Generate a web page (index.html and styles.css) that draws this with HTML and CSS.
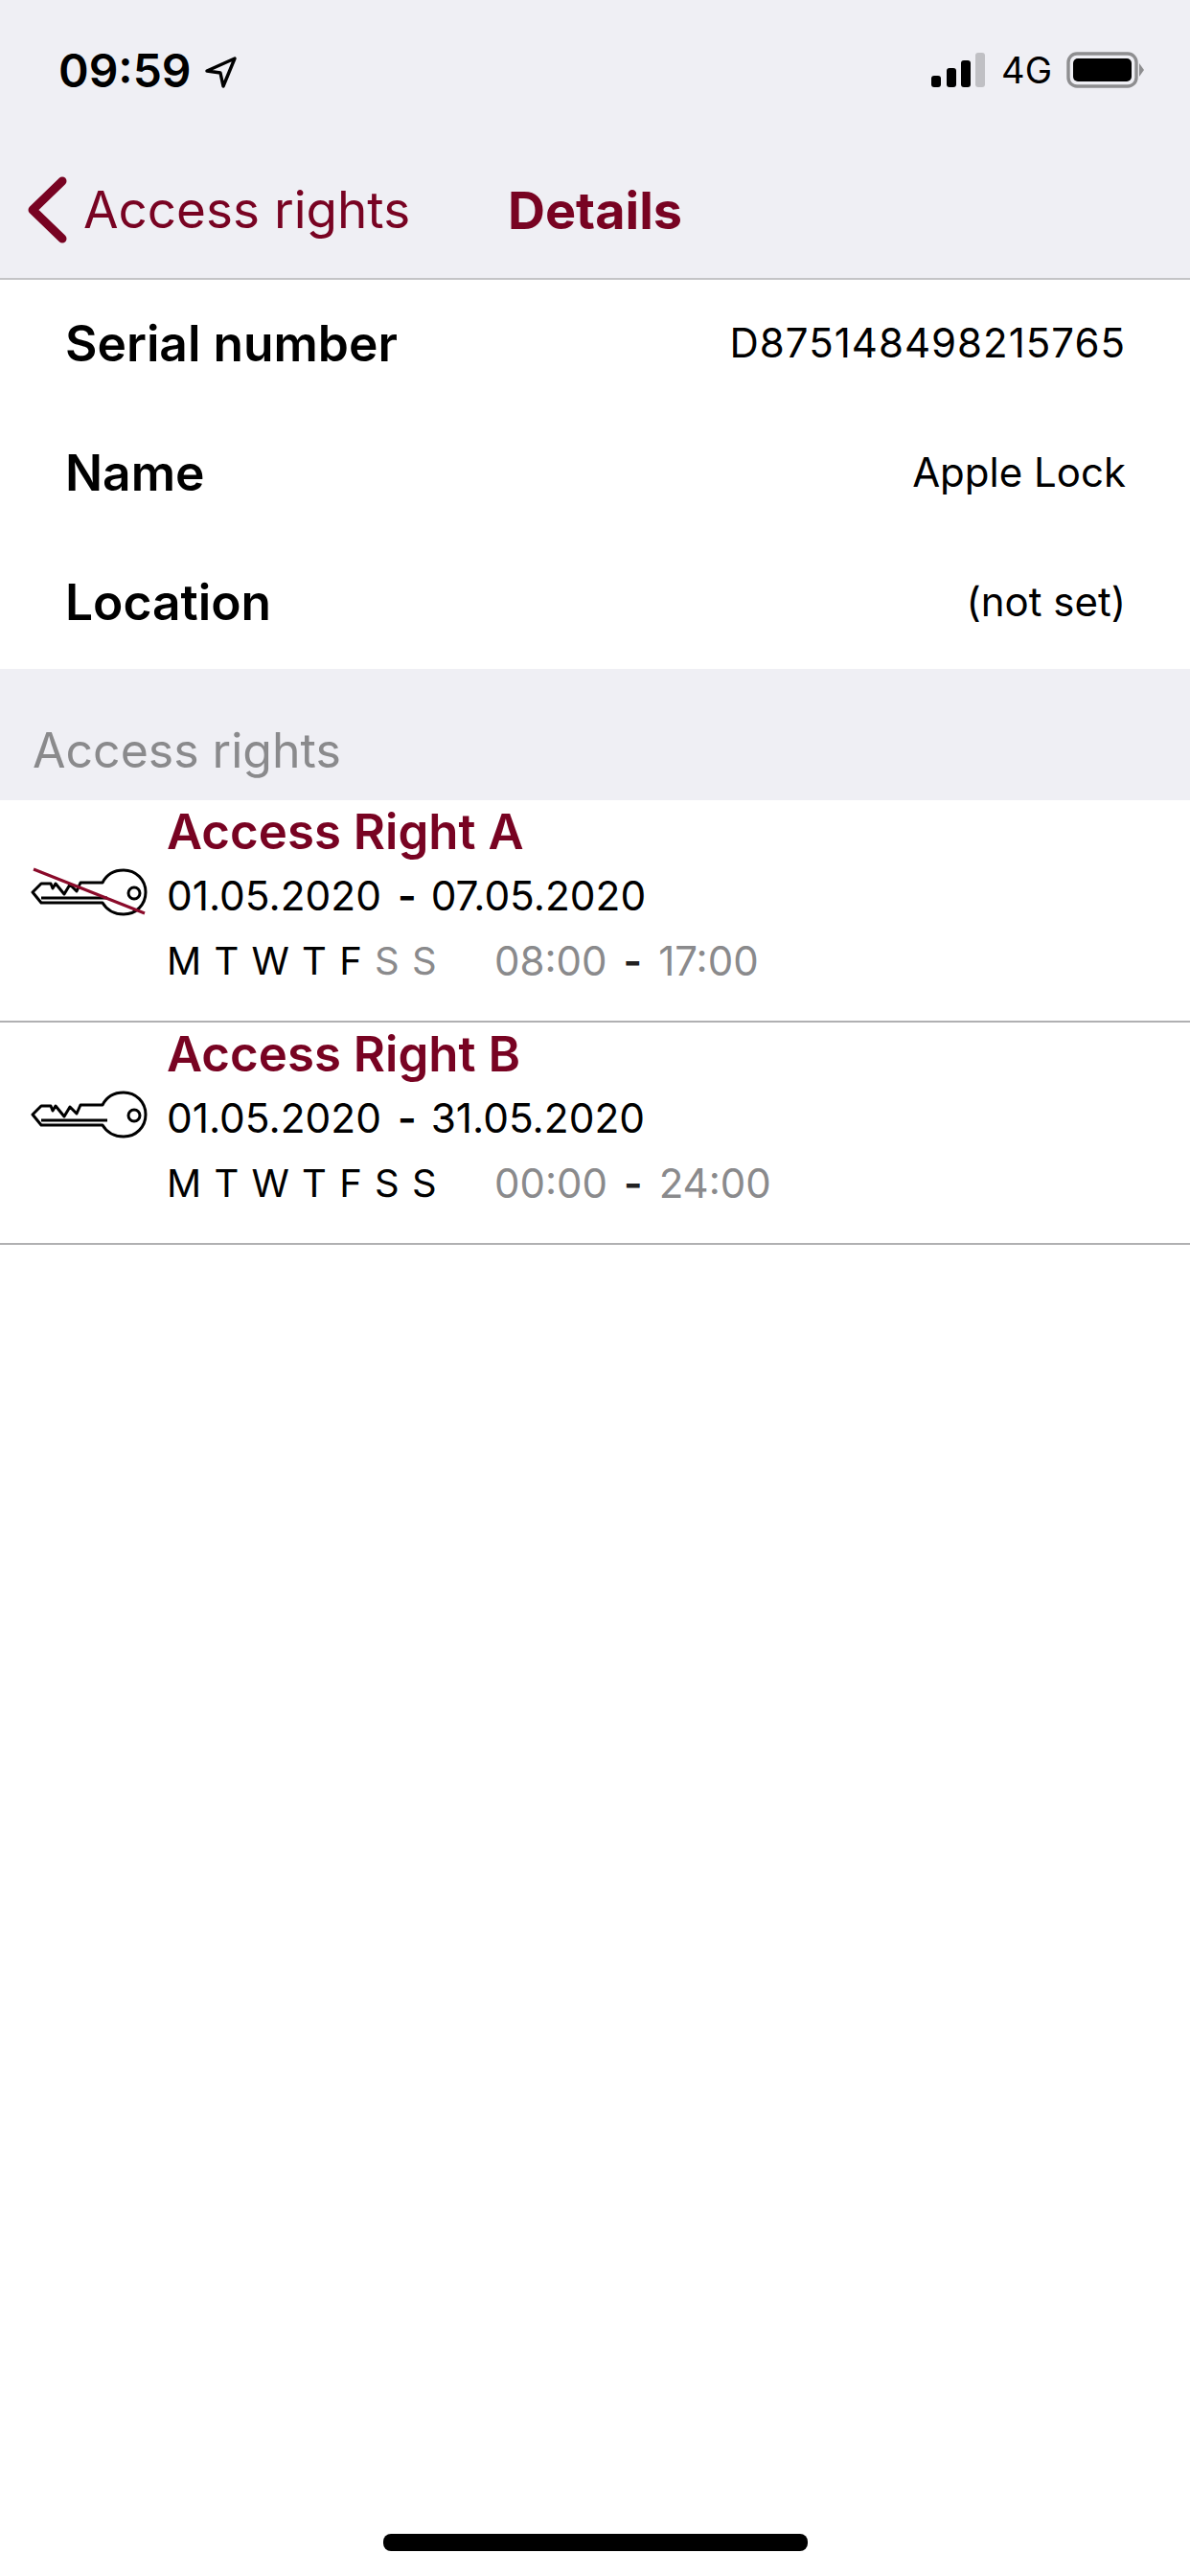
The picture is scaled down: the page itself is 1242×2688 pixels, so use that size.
FILE: index.html
```html
<!DOCTYPE html>
<html lang="en">
<head>
<meta charset="utf-8">
<title>Details</title>
<link rel="stylesheet" href="styles.css">
</head>
<body>
<div class="screen">
  <header class="top">
    <div class="status">
      <div class="status-left">
        <span class="time">09:59</span>
        <svg class="loc" viewBox="0 0 34 34"><path d="M2 15 31 2 19 31 16 17Z" fill="none" stroke="#000" stroke-width="3.4" stroke-linejoin="round"/></svg>
      </div>
      <div class="status-right">
        <div class="signal"><i class="b1"></i><i class="b2"></i><i class="b3"></i><i class="b4"></i></div>
        <span class="net">4G</span>
        <svg class="batt" viewBox="0 0 82 38"><rect x="2" y="2" width="71" height="34" rx="9" fill="none" stroke="#8e8e90" stroke-width="3.4"/><rect x="7" y="7" width="61" height="24" rx="5" fill="#000"/><path d="M76 12 81 19 76 26Z" fill="#8e8e90"/></svg>
      </div>
    </div>
    <nav class="nav">
      <div class="back">
        <svg class="chev" viewBox="0 0 44 72"><path d="M37 6 6 36 37 66" fill="none" stroke="#780322" stroke-width="9" stroke-linecap="round" stroke-linejoin="round"/></svg>
        <span class="back-text">Access rights</span>
      </div>
      <div class="title">Details</div>
      <div class="nav-end"></div>
    </nav>
  </header>

  <section class="props">
    <div class="prop"><span class="prop-k">Serial number</span><span class="prop-v prop-serial">D875148498215765</span></div>
    <div class="prop"><span class="prop-k">Name</span><span class="prop-v">Apple Lock</span></div>
    <div class="prop"><span class="prop-k">Location</span><span class="prop-v">(not set)</span></div>
  </section>

  <div class="section-head">Access rights</div>

  <article class="right">
    <svg class="key" viewBox="0 0 124 56">
      <path d="M2 28 11 19H21L23 24 26 19 35 30 41 20 48 27 52 18H75C79 10 87 5 97 5 110 5 120 15 120 28 120 41 110 51 97 51 87 51 79 46 75 39H11Z" fill="none" stroke="#000" stroke-width="3" stroke-linejoin="round"/>
      <path d="M11 34H80" stroke="#000" stroke-width="3"/>
      <circle cx="108" cy="29" r="6" fill="none" stroke="#000" stroke-width="3"/>
      <path d="M3 4 119 50" stroke="#8a0a2a" stroke-width="3"/>
    </svg>
    <div class="right-body">
      <div class="right-title">Access Right A</div>
      <div class="right-date"><span>01.05.2020</span><span class="dash">-</span><span>07.05.2020</span></div>
      <div class="right-sched"><span class="days">M T W T F <span class="off">S S</span></span><span class="hours"><span>08:00</span><span class="dash">-</span><span>17:00</span></span></div>
    </div>
  </article>

  <article class="right">
    <svg class="key" viewBox="0 0 124 56">
      <path d="M2 28 11 19H21L23 24 26 19 35 30 41 20 48 27 52 18H75C79 10 87 5 97 5 110 5 120 15 120 28 120 41 110 51 97 51 87 51 79 46 75 39H11Z" fill="none" stroke="#000" stroke-width="3" stroke-linejoin="round"/>
      <path d="M11 34H80" stroke="#000" stroke-width="3"/>
      <circle cx="108" cy="29" r="6" fill="none" stroke="#000" stroke-width="3"/>
    </svg>
    <div class="right-body">
      <div class="right-title">Access Right B</div>
      <div class="right-date"><span>01.05.2020</span><span class="dash">-</span><span>31.05.2020</span></div>
      <div class="right-sched"><span class="days">M T W T F S S</span><span class="hours"><span>00:00</span><span class="dash">-</span><span>24:00</span></span></div>
    </div>
  </article>

  <div class="home"></div>
</div>
</body>
</html>
```
FILE: styles.css
```css
* { box-sizing: border-box; }
html, body { margin: 0; padding: 0; background: #fff; }
.screen {
  position: relative;
  width: 1242px;
  height: 2688px;
  overflow: hidden;
  background: #fff;
  font-family: Inter, "Liberation Sans", sans-serif;
  color: #000;
}
.top { background: #efeff4; height: 292px; border-bottom: 2px solid #c4c4c6; }
.status {
  height: 150px;
  padding: 48px 47px 0 61px;
  display: flex;
  justify-content: space-between;
  align-items: flex-start;
}
.status-left { display: flex; align-items: center; gap: 14px; height: 50px; }
.time { font-size: 48px; font-weight: 600; }
.loc { width: 34px; height: 34px; margin-top: 6px; }
.status-right { display: flex; align-items: center; height: 50px; }
.signal { display: flex; align-items: flex-end; gap: 5.3px; height: 36px; }
.signal i { display: block; width: 10px; background: #000; border-radius: 3px; }
.signal .b1 { height: 12px; }
.signal .b2 { height: 20px; }
.signal .b3 { height: 28px; }
.signal .b4 { height: 36px; background: #c0c0c4; }
.net { font-size: 38px; margin-left: 17px; margin-right: 15px; }
.batt { width: 82px; height: 38px; }
.nav {
  height: 140px;
  display: grid;
  grid-template-columns: 1fr auto 1fr;
  align-items: center;
  padding: 0 28px 2px;
}
.back { display: flex; align-items: center; gap: 15px; }
.chev { width: 44px; height: 72px; }
.back-text { font-size: 53px; color: #780322; font-weight: 400; }
.title { font-size: 54px; font-weight: 700; color: #780322; }
.props { height: 406px; }
.prop {
  height: 135px;
  display: flex;
  justify-content: space-between;
  align-items: center;
  padding: 0 67px 4px 68px;
}
.prop-k { font-size: 51.5px; font-weight: 600; }
.prop-v { font-size: 42px; }
.prop-serial { letter-spacing: 1px; }
.section-head {
  height: 137px;
  background: #efeff4;
  color: #8a8a8c;
  font-size: 50px;
  padding: 55px 0 0 34px;
  line-height: 60px;
}
.right {
  height: 232px;
  border-bottom: 2px solid #b0b0b2;
  display: flex;
  align-items: flex-start;
  padding-left: 32px;
}
.key { width: 124px; height: 56px; margin-top: 68px; flex: none; }
.right-body { margin-left: 18px; padding-top: 3px; }
.right-title { font-size: 51px; font-weight: 600; color: #780322; height: 60px; line-height: 60px; }
.right-date { font-size: 42.4px; height: 68px; line-height: 68px; margin-top: 3px; display: flex; }
.right-date .dash { margin: 0 15px 0 17px; font-weight: 600; }
.right-sched { font-size: 40px; height: 68px; line-height: 68px; display: flex; }
.days { width: 342px; white-space: pre; word-spacing: 2px; }
.off { color: #8a8a8c; }
.hours { color: #8a8a8c; font-size: 42px; display: flex; }
.hours .dash { color: #222; margin: 0 17px; font-weight: 600; }
.home {
  position: absolute;
  left: 400px;
  top: 2644px;
  width: 443px;
  height: 18px;
  border-radius: 8px;
  background: #000;
}
```
